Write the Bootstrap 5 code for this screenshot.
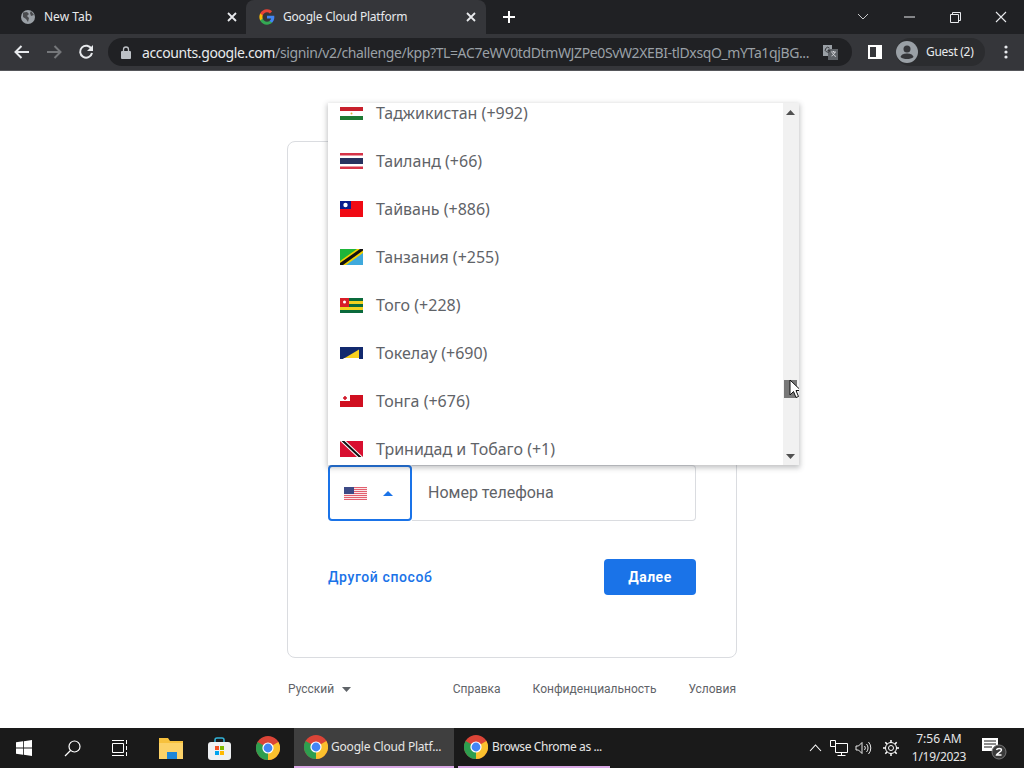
<!doctype html>
<html lang="ru"><head><meta charset="utf-8"><title>Google Cloud Platform</title>
<link href="https://cdn.jsdelivr.net/npm/bootstrap@5.3.0/dist/css/bootstrap.min.css" rel="stylesheet">
<style>
html,body{height:100%;overflow:hidden}
body{font-family:"Noto Sans","Liberation Sans",sans-serif;background:#fff}
.shell{height:768px;width:1024px}
.flex-none{flex:none}
.strip{height:34px;background:#202124;color:#e8eaed;font-size:12px}
.tabx{height:34px;margin-left:8px;padding:0 7px 0 12px;width:236px}
.tabx-on{width:240px;margin-left:2px;background:#35363a;border-radius:8px 8px 0 0;padding:0 10px 0 13px;letter-spacing:-.2px}
.tabx svg.ic{margin-right:8px}
.plus{width:24px;margin-left:11px}
.winbtn{width:46px;height:34px}
.tools{height:37px;background:#35363a;border-bottom:1px solid #55565a;padding-left:11px}
.tbtn{width:22px;height:22px;margin-right:10px}
.omni{width:744px;height:28px;margin-left:1px;background:#202124;border-radius:14px;padding:0 10px 0 13px;font-size:14px;color:#9aa0a6;white-space:nowrap}
.omni b{font-weight:400;color:#e8eaed}
.urltext{margin-left:11px;width:680px;letter-spacing:-.38px}
.guest{width:89px;height:28px;margin-left:14px;background:#2b2c2f;border-radius:14px;color:#e8eaed;font-size:12px;letter-spacing:-.3px}
.pagearea{background:#fff;font-family:Roboto,"Liberation Sans",sans-serif;padding-top:70px}
.signcard{width:450px;height:517px;border:1px solid #dadce0;border-radius:8px;padding:0 40px 62px}
.phone{height:56px}
.ccode{width:84px;border:2px solid #1a73e8;border-radius:4px;padding-left:14px}
.phonein{border:1px solid #dadce0;border-left:0;border-radius:0 4px 4px 0;padding-left:16px;color:#5f6368;font-size:16px}
.carets{margin-left:16px}
.actions{margin-top:38px}
.altlink{color:#1a73e8;font-size:14px;font-weight:500;letter-spacing:.6px;text-decoration:none}
.nextbtn{width:92px;height:36px;background:#1a73e8;color:#fff;border:0;border-radius:4px;font-size:14px;font-weight:700;padding:0;letter-spacing:.5px}
.foot{width:450px;font-size:12px;color:#5f6368;padding:22px 1px 0 1px}
.foot span.lnk{margin-left:32px}
.menuwrap{left:328px;top:103px;width:471px;height:362px;background:#fff;box-shadow:0 2px 5px 1px rgba(60,64,67,.3)}
.rows{margin-top:-14px;margin-right:16px}
.rowc{height:48px;padding-left:12px;font-size:16px;color:#5f6368}
.rowc svg{margin-right:13px;flex:none}
.sbar{width:16px;background:#f1f1f1;top:0;right:0;bottom:0}
.sthumb{left:1px;top:277px;width:13px;height:18px;background:#787878}
.sup{left:3px;top:7px}.sdn{left:3px;bottom:6px}
.cursorpin{left:461px;top:276px}
.taskb{height:40px;background:#1a1a1a;color:#e6e6e6;font-size:12px}
.tskic{width:48px;height:40px}
.tskgap{margin-left:3px}
.tskgap2{margin-left:1px}
.tskgap3{margin-right:2px}
.tskapp{height:40px;border-bottom:2px solid #d9a8e5;white-space:nowrap}
.tskon{width:160px;background:#3f3f3f;padding-left:10px;letter-spacing:-.2px}
.tskon svg{margin-right:3px}
.tskoff{width:152px;margin-left:4px;padding-left:6px;letter-spacing:-.4px}
.tskoff svg{margin-right:4px}
.tray{width:24px}
.clock{width:60px;line-height:18px;text-align:center;margin-left:6px}
.clock div+div{letter-spacing:-.3px}
.notice{width:38px;margin-left:6px;margin-right:11px}
</style></head>
<body>
<svg width="0" height="0" class="d-none">
<symbol id="chromeic" viewBox="0 0 24 24"><circle cx="12" cy="12" r="12" fill="#db4437"/><path d="M12 12 22.400 6A12 12 0 0 1 12 24z" fill="#fbc02d"/><path d="M12 12 12 24A12 12 0 0 1 1.600 6z" fill="#2e9e4f"/><circle cx="12" cy="12" r="5.600" fill="#fff"/><circle cx="12" cy="12" r="4.400" fill="#4285f4"/></symbol>
<symbol id="usflag" viewBox="0 0 23 13"><rect width="23" height="13" fill="#e2606f"/><path d="M0 1.500h23M0 3.500h23M0 5.500h23M0 7.500h23M0 9.500h23M0 11.500h23" stroke="#fbe6e8" stroke-width="1"/><rect width="10" height="7" fill="#3d4a86"/></symbol>
</svg>
<div class="shell d-flex flex-column position-relative">
  <div class="strip d-flex align-items-center flex-none">
    <div class="tabx d-flex align-items-center">
      <svg class="ic" width="16" height="16" viewBox="0 0 16 16"><circle cx="8" cy="8" r="7" fill="#9aa0a6"/><path d="M3 3.500 7 3l2 2-2 2 2 2-1 4-2-3-3-2zM11 2l3 4-3 1-1-3z" fill="#4a4b4e"/></svg>
      <span class="flex-grow-1">New Tab</span>
      <svg width="10" height="10" viewBox="0 0 10 10"><path d="M1 1l8 8M9 1l-8 8" stroke="#e8eaed" stroke-width="1.800"/></svg>
    </div>
    <div class="tabx tabx-on d-flex align-items-center">
      <svg class="ic" width="16" height="16" viewBox="0 0 48 48"><path fill="#4285f4" d="M46 24.500c0-1.600-.1-3.100-.4-4.500H24v8.500h12.400c-.5 2.900-2.100 5.300-4.500 6.900v5.700h7.300C43.500 36.700 46 31.100 46 24.500z"/><path fill="#34a853" d="M24 47c6.200 0 11.400-2 15.200-5.500l-7.300-5.700c-2 1.400-4.700 2.200-7.900 2.200-6 0-11.100-4.100-12.900-9.500H3.500v5.900C7.300 42 15 47 24 47z"/><path fill="#fbbc05" d="M11.100 28.500c-.5-1.400-.7-2.900-.7-4.500s.3-3.100.7-4.500v-5.900H3.500C2 16.700 1 20.200 1 24s1 7.300 2.500 10.400z"/><path fill="#ea4335" d="M24 10c3.400 0 6.400 1.200 8.800 3.400l6.500-6.500C35.400 3.300 30.200 1 24 1 15 1 7.300 6 3.500 13.600l7.600 5.900C12.900 14.100 18 10 24 10z"/></svg>
      <span class="flex-grow-1">Google Cloud Platform</span>
      <svg width="10" height="10" viewBox="0 0 10 10"><path d="M1 1l8 8M9 1l-8 8" stroke="#e8eaed" stroke-width="1.800"/></svg>
    </div>
    <div class="plus d-flex justify-content-center"><svg width="14" height="14" viewBox="0 0 14 14"><path d="M7 1v12M1 7h12" stroke="#fff" stroke-width="2"/></svg></div>
    <div class="ms-auto d-flex">
      <div class="winbtn d-flex align-items-center justify-content-center"><svg width="12" height="8" viewBox="0 0 12 8"><path d="M1 1l5 5 5-5" fill="none" stroke="#c8c9cb"/></svg></div>
      <div class="winbtn d-flex align-items-center justify-content-center"><svg width="11" height="2" viewBox="0 0 11 2"><path d="M0 1h11" stroke="#e8eaed"/></svg></div>
      <div class="winbtn d-flex align-items-center justify-content-center"><svg width="11" height="11" viewBox="0 0 11 11"><path d="M.5 2.500h8v8h-8zM2.500 2.500v-2h8v8h-2" fill="none" stroke="#e8eaed"/></svg></div>
      <div class="winbtn d-flex align-items-center justify-content-center"><svg width="12" height="12" viewBox="0 0 12 12"><path d="M1 1l10 10M11 1 1 11" stroke="#e8eaed" stroke-width="1.100"/></svg></div>
    </div>
  </div>
  <div class="tools d-flex align-items-center flex-none">
    <div class="tbtn d-flex align-items-center justify-content-center"><svg width="16" height="14" viewBox="0 0 16 14"><path d="M15 7H2M7.500 1 1.500 7l6 6" fill="none" stroke="#e8eaed" stroke-width="2"/></svg></div>
    <div class="tbtn d-flex align-items-center justify-content-center"><svg width="16" height="14" viewBox="0 0 16 14"><path d="M1 7h13M8.500 1l6 6-6 6" fill="none" stroke="#75777a" stroke-width="2"/></svg></div>
    <div class="tbtn d-flex align-items-center justify-content-center"><svg width="16" height="16" viewBox="0 0 16 16"><path d="M13.500 5A6 6 0 1 0 14 9" fill="none" stroke="#e8eaed" stroke-width="2"/><path d="M15 1v6H9z" fill="#e8eaed"/></svg></div>
    <div class="omni d-flex align-items-center">
      <svg class="flex-none" width="10" height="13" viewBox="0 0 10 13"><path d="M2.500 5V3.500a2.500 2.500 0 0 1 5 0V5" fill="none" stroke="#bdc1c6" stroke-width="1.300"/><rect y="5" width="10" height="8" rx="1" fill="#bdc1c6"/></svg>
      <div class="urltext"><b>accounts.google.com</b>/signin/v2/challenge/kpp?TL=AC7eWV0tdDtmWJZPe0SvW2XEBI-tlDxsqO_mYTa1qjBG...</div>
      <svg class="ms-auto me-1 flex-none" width="15" height="15" viewBox="0 0 15 15"><rect width="9" height="11" fill="#9aa0a6"/><rect x="5" y="4" width="10" height="11" fill="#5f6368"/><path d="M8 7h5M10.500 6v1M12 7c-.5 2-2 3.500-3.500 4M9.500 8c.5 1.500 2 3 3.500 3.500" stroke="#e8eaed" fill="none" stroke-width=".8"/><path d="M6.500 3.200A2.400 2.400 0 1 0 7 5.500H4.500" stroke="#35363a" fill="none"/></svg>
    </div>
    <div class="ms-3"><svg class="d-block" width="14" height="14" viewBox="0 0 14 14"><path fill-rule="evenodd" d="M0 0h14v14H0zM2 2v10h6V2z" fill="#fff"/></svg></div>
    <div class="guest d-flex align-items-center">
      <svg class="me-2 flex-none" width="22" height="22" viewBox="0 0 22 22"><circle cx="11" cy="11" r="11" fill="#9aa0a6"/><circle cx="11" cy="8" r="3.500" fill="#35363a"/><path d="M4.500 16c1-3 4-3.500 6.500-3.500s5.500.5 6.500 3.500c-1.500 1.500-4 2-6.500 2s-5-.5-6.500-2z" fill="#35363a"/></svg>
      <span>Guest (2)</span>
    </div>
    <div class="ms-auto me-3"><svg class="d-block" width="4" height="14" viewBox="0 0 4 14"><circle cx="2" cy="2" r="1.600" fill="#e8eaed"/><circle cx="2" cy="7" r="1.600" fill="#e8eaed"/><circle cx="2" cy="12" r="1.600" fill="#e8eaed"/></svg></div>
  </div>
  <main class="pagearea flex-grow-1">
    <div class="signcard mx-auto d-flex flex-column justify-content-end">
      <div class="phone d-flex">
        <div class="ccode d-flex align-items-center">
          <svg width="23" height="13"><use href="#usflag"/></svg>
          <svg class="carets" width="10" height="5" viewBox="0 0 10 5"><path d="M0 5l5-5 5 5z" fill="#1a73e8"/></svg>
        </div>
        <div class="phonein flex-grow-1 d-flex align-items-center">Номер телефона</div>
      </div>
      <div class="actions d-flex justify-content-between align-items-center">
        <a href="#" class="altlink">Другой способ</a>
        <button class="nextbtn" type="button">Далее</button>
      </div>
    </div>
    <div class="foot mx-auto d-flex align-items-center">
      <span>Русский</span>
      <svg class="ms-2" width="9" height="5" viewBox="0 0 9 5"><path d="M0 0h9L4.500 5z" fill="#5f6368"/></svg>
      <span class="lnk ms-auto">Справка</span><span class="lnk">Конфиденциальность</span><span class="lnk">Условия</span>
    </div>
  </main>
  <div class="menuwrap position-absolute overflow-hidden">
    <div class="rows">
      <div class="rowc d-flex align-items-center"><svg width="23" height="16" viewBox="0 0 23 16"><rect y="2" width="23" height="4" fill="#c8202c"/><rect y="6" width="23" height="5" fill="#fff"/><rect y="11" width="23" height="4" fill="#1e7a34"/><circle cx="11.500" cy="8.500" r="1" fill="#e0b040"/></svg>Таджикистан (+992)</div>
      <div class="rowc d-flex align-items-center"><svg width="23" height="16" viewBox="0 0 23 16"><rect width="23" height="16" fill="#fff"/><rect width="23" height="2.500" fill="#d63348"/><rect y="13.500" width="23" height="2.500" fill="#d63348"/><rect y="5" width="23" height="6" fill="#27315f"/></svg>Таиланд (+66)</div>
      <div class="rowc d-flex align-items-center"><svg width="23" height="16" viewBox="0 0 23 16"><rect width="23" height="16" fill="#f00a14"/><rect width="11" height="8" fill="#0a1c8c"/><circle cx="5.500" cy="4" r="2.200" fill="#fff"/></svg>Тайвань (+886)</div>
      <div class="rowc d-flex align-items-center"><svg width="23" height="16" viewBox="0 0 23 16"><rect width="23" height="16" fill="#3fa9dc"/><path d="M0 0h23L0 16z" fill="#1eb53a"/><path d="M0 16v-4L17 0h6v4L6 16z" fill="#f0d000"/><path d="M0 16v-2L20 0h3v1.500L3 16z" fill="#111"/></svg>Танзания (+255)</div>
      <div class="rowc d-flex align-items-center"><svg width="23" height="16" viewBox="0 0 23 16"><rect y="1" width="23" height="15" fill="#f2d21f"/><rect y="1" width="23" height="3" fill="#0a6a3c"/><rect y="7" width="23" height="3" fill="#0a6a3c"/><rect y="13" width="23" height="3" fill="#0a6a3c"/><rect y="1" width="9" height="9" fill="#d81e28"/><circle cx="4.500" cy="5" r="1.500" fill="#fff"/></svg>Того (+228)</div>
      <div class="rowc d-flex align-items-center"><svg width="23" height="16" viewBox="0 0 23 16"><rect y="2" width="23" height="12" fill="#12296e"/><path d="M3 14 19 4.500V14z" fill="#f8d020"/><path d="M3 14h16v-1H4.500z" fill="#fff"/></svg>Токелау (+690)</div>
      <div class="rowc d-flex align-items-center"><svg width="23" height="16" viewBox="0 0 23 16"><rect y="2" width="23" height="12" fill="#d00f20"/><rect y="2" width="10" height="6" fill="#fff"/><path d="M5 3v4M3 5h4" stroke="#d00f20" stroke-width="1.500"/></svg>Тонга (+676)</div>
      <div class="rowc d-flex align-items-center"><svg width="23" height="16" viewBox="0 0 23 16"><rect width="23" height="16" fill="#d80f30"/><path d="M0 0h6l17 16h-6z" fill="#fff"/><path d="M0 0h3l17 16h-3z" transform="translate(1.500)" fill="#111"/></svg>Тринидад и Тобаго (+1)</div>
    </div>
    <div class="sbar position-absolute">
      <svg class="sup position-absolute d-block" width="9" height="5" viewBox="0 0 9 5"><path d="M0 5l4.500-5L9 5z" fill="#505050"/></svg>
      <div class="sthumb position-absolute"></div>
      <svg class="sdn position-absolute d-block" width="9" height="5" viewBox="0 0 9 5"><path d="M0 0h9L4.500 5z" fill="#505050"/></svg>
    </div>
    <svg class="cursorpin position-absolute" width="13" height="20" viewBox="0 0 13 20"><path d="M1 1v15l3.500-3.500 2.500 6 2.500-1-2.500-6H12z" fill="#fff" stroke="#111" stroke-width="1"/></svg>
  </div>
  <footer class="taskb d-flex align-items-center flex-none">
    <div class="tskic d-flex align-items-center justify-content-center"><svg width="16" height="16" viewBox="0 0 16 16"><path d="M0 2.300 7 1.300v6.300H0zM7.800 1.200 16 0v7.600H7.800zM0 8.400h7v6.300l-7-1zM7.800 8.400H16V16l-8.200-1.200z" fill="#fff"/></svg></div>
    <div class="tskic d-flex align-items-center justify-content-center"><svg width="17" height="17" viewBox="0 0 17 17"><circle cx="10.500" cy="6.500" r="5.500" fill="none" stroke="#fff" stroke-width="1.200"/><path d="M6.500 10.500 1 16" stroke="#fff" stroke-width="1.300"/></svg></div>
    <div class="tskic d-flex align-items-center justify-content-center"><svg width="17" height="16" viewBox="0 0 17 16"><path d="M.5 3.500h11v9H.5zM0 .5h12M0 15.500h12M14.500 0v4M14.500 6v4M14.500 12v4" fill="none" stroke="#fff"/></svg></div>
    <div class="tskic tskgap d-flex align-items-center justify-content-center"><svg width="24" height="22" viewBox="0 0 24 22"><path d="M0 1h9l2 3h13v18H0z" fill="#f7c13d"/><rect y="6" width="24" height="16" fill="#fcd268"/><rect x="8" y="15" width="10" height="7" fill="#1d86d8"/></svg></div>
    <div class="tskic d-flex align-items-center justify-content-center"><svg width="23" height="23" viewBox="0 0 23 23"><path d="M7 5V3a2 2 0 0 1 2-2h5a2 2 0 0 1 2 2v2" fill="none" stroke="#32b3d8" stroke-width="1.500"/><rect y="5" width="23" height="18" rx="3" fill="#eef0f2"/><rect x="7" y="9" width="4" height="4" fill="#f25022"/><rect x="12" y="9" width="4" height="4" fill="#7fba00"/><rect x="7" y="14" width="4" height="4" fill="#00a4ef"/><rect x="12" y="14" width="4" height="4" fill="#ffb900"/></svg></div>
    <div class="tskic tskgap2 tskgap3 d-flex align-items-center justify-content-center"><svg width="24" height="24"><use href="#chromeic"/></svg></div>
    <div class="tskapp tskon d-flex align-items-center"><svg class="flex-none" width="24" height="24"><use href="#chromeic"/></svg><span>Google Cloud Platf...</span></div>
    <div class="tskapp tskoff d-flex align-items-center"><svg class="flex-none" width="24" height="24"><use href="#chromeic"/></svg><span>Browse Chrome as ...</span></div>
    <div class="ms-auto d-flex align-items-center">
      <div class="tray d-flex justify-content-center"><svg width="13" height="8" viewBox="0 0 13 8"><path d="M1 7l5.500-6L12 7" fill="none" stroke="#fff" stroke-width="1.100"/></svg></div>
      <div class="tray d-flex justify-content-center"><svg width="18" height="16" viewBox="0 0 18 16"><path d="M5.500 3.500h12v9h-12zM11.500 12.500v3M7.500 15.500h8M.5.500h5v6h-5z" fill="#1a1a1a" stroke="#fff"/></svg></div>
      <div class="tray d-flex justify-content-center"><svg width="17" height="14" viewBox="0 0 17 14"><path d="M1 5h2.500L7 1.500v11L3.500 9H1zM9.500 5a3 3 0 0 1 0 4M11.500 3a6 6 0 0 1 0 8M13.500 1a9 9 0 0 1 0 12" fill="none" stroke="#fff" stroke-width=".9"/></svg></div>
      <div class="tray ms-1 d-flex justify-content-center"><svg width="16" height="16" viewBox="0 0 16 16"><circle cx="8" cy="8" r="2.500" fill="none" stroke="#fff"/><circle cx="8" cy="8" r="5.500" fill="none" stroke="#fff"/><path d="M8 0v2.500M8 13.500V16M0 8h2.500M13.500 8H16M2.300 2.300l1.800 1.800M11.900 11.900l1.800 1.800M2.300 13.700l1.800-1.800M11.900 4.100l1.800-1.800" stroke="#fff" stroke-width="1.500"/></svg></div>
      <div class="clock"><div>7:56 AM</div><div>1/19/2023</div></div>
      <div class="notice position-relative d-flex justify-content-center"><svg width="30" height="24" viewBox="0 0 30 24"><path d="M3 2h16v13H3z" fill="#fff"/><path d="M5 5h12M5 8h12M5 11h8" stroke="#1a1a1a"/><circle cx="20" cy="16" r="7" fill="#3a3a3a" stroke="#777"/><path d="M17.500 14c.5-2 5-2 5 0 0 2-4.500 3-5 5h5" fill="none" stroke="#fff" stroke-width="1.400"/></svg></div>
    </div>
  </footer>
</div>
<script src="https://cdn.jsdelivr.net/npm/bootstrap@5.3.0/dist/js/bootstrap.bundle.min.js"></script>
</body></html>
